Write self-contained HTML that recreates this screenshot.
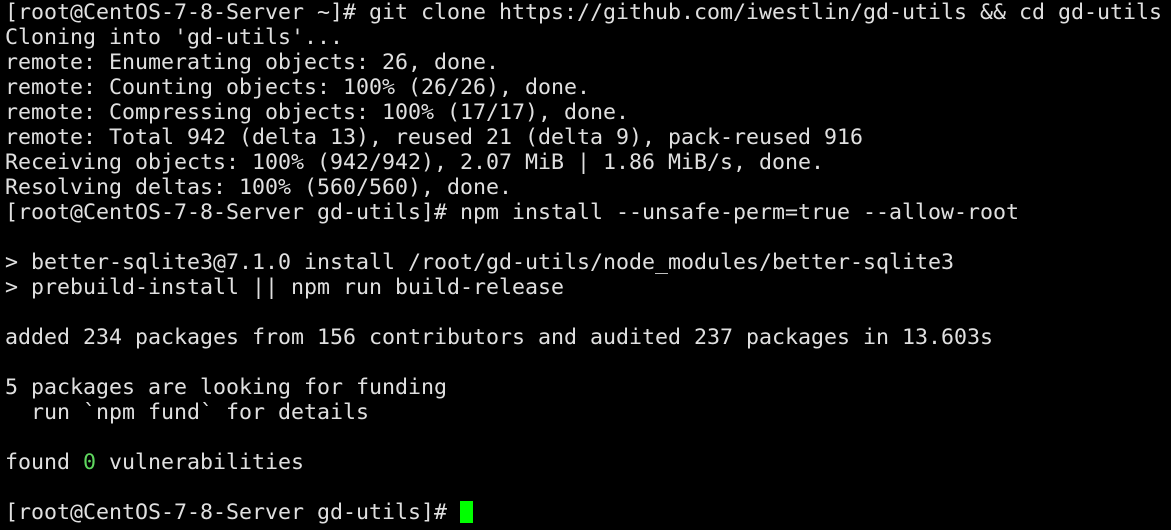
<!DOCTYPE html>
<html><head><style>
html,body{margin:0;padding:0;background:#000;width:1171px;height:530px;overflow:hidden}
pre{margin:0;padding:0 0 0 5px;font-family:"DejaVu Sans Mono",monospace;font-size:21.6px;line-height:25px;color:#e0e0e0;white-space:pre}
.g{color:#5fd75f}
.c{display:inline-block;width:13px;height:22px;background:#00ff00;vertical-align:-4px}
</style></head><body><pre>[root@CentOS-7-8-Server ~]# git clone https://github.com/iwestlin/gd-utils &amp;&amp; cd gd-utils
Cloning into 'gd-utils'...
remote: Enumerating objects: 26, done.
remote: Counting objects: 100% (26/26), done.
remote: Compressing objects: 100% (17/17), done.
remote: Total 942 (delta 13), reused 21 (delta 9), pack-reused 916
Receiving objects: 100% (942/942), 2.07 MiB | 1.86 MiB/s, done.
Resolving deltas: 100% (560/560), done.
[root@CentOS-7-8-Server gd-utils]# npm install --unsafe-perm=true --allow-root

&gt; better-sqlite3@7.1.0 install /root/gd-utils/node_modules/better-sqlite3
&gt; prebuild-install || npm run build-release

added 234 packages from 156 contributors and audited 237 packages in 13.603s

5 packages are looking for funding
  run `npm fund` for details

found <span class="g">0</span> vulnerabilities

[root@CentOS-7-8-Server gd-utils]# <span class="c"></span></pre></body></html>
